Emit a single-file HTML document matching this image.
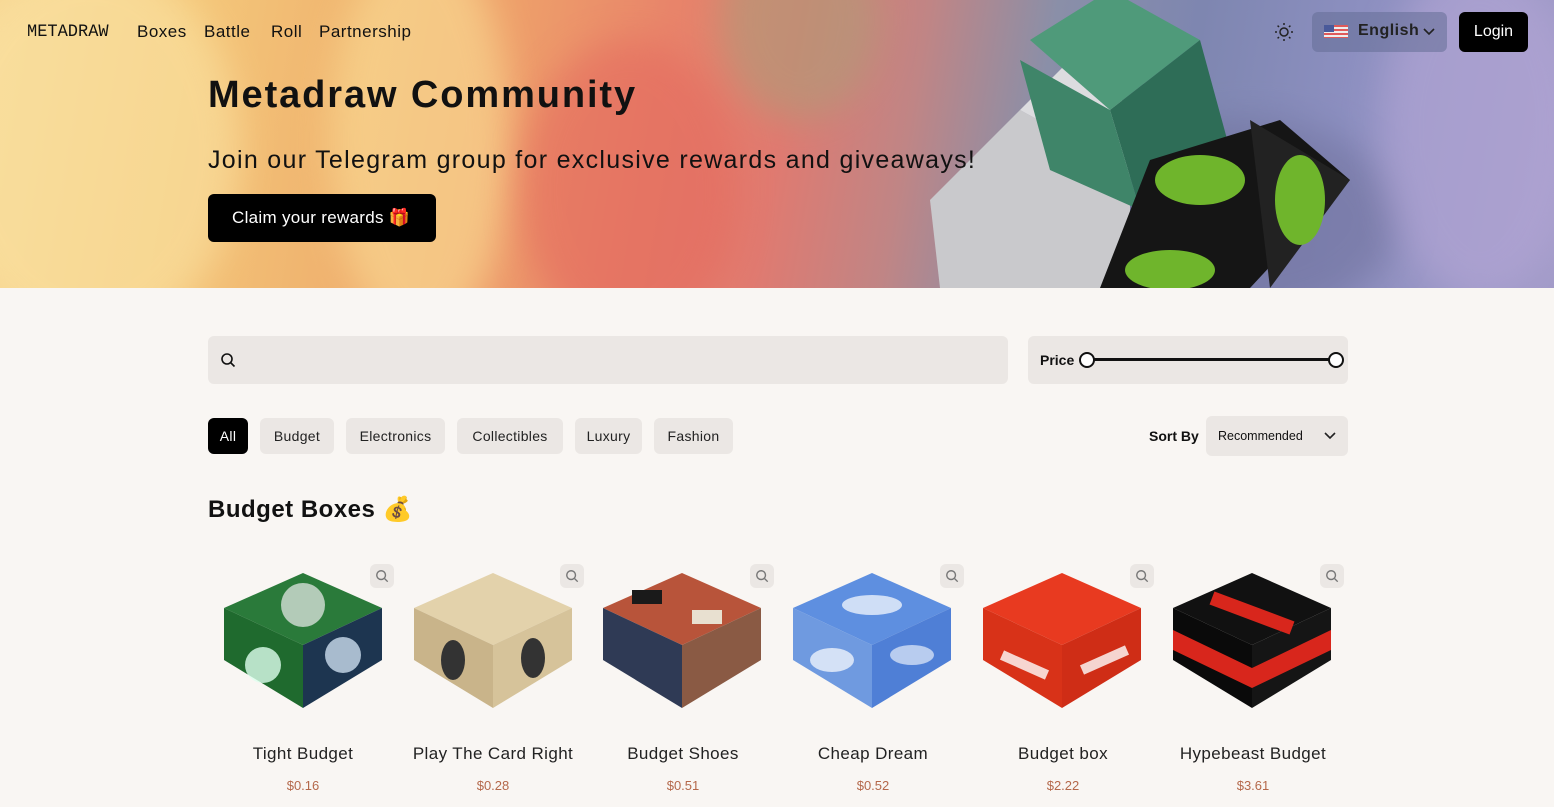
<!DOCTYPE html>
<html><head><meta charset="utf-8"><style>
*{box-sizing:border-box;margin:0;padding:0}
body{width:1554px;height:807px;overflow:hidden;background:#f9f6f3;font-family:"Liberation Sans",sans-serif;color:#111;position:relative}
.hero{position:absolute;left:0;top:0;width:1554px;height:288px;overflow:hidden;
background:linear-gradient(100deg,#f7d48f 0%,#f4c77a 12%,#f0b570 22%,#eea06a 32%,#e8846a 42%,#e07a70 50%,#c08585 58%,#8a8fa8 66%,#7e86b0 75%,#8c8fc0 85%,#a29bc8 100%)}
.w{position:absolute;border-radius:50%;filter:blur(18px);opacity:.55}
nav{position:absolute;top:0;left:0;width:100%;height:64px}
.logo{position:absolute;left:27px;top:23px;font-family:"Liberation Mono",monospace;font-size:17px;transform:scaleY(1.05)}
.nl{position:absolute;top:22px;font-size:17px;font-weight:500;letter-spacing:.5px}
.btn{position:absolute;background:#000;color:#fff;border-radius:6px}
.chip{position:absolute;top:418px;height:36px;background:#ebe7e4;border-radius:6px;font-size:14px;line-height:36px;text-align:center;color:#222;letter-spacing:.3px}
.name{position:absolute;top:744px;width:190px;text-align:center;font-size:17px;color:#222;letter-spacing:.4px}
.price{position:absolute;top:778px;width:190px;text-align:center;font-size:13px;color:#b4684a}
.mag{position:absolute;top:564px;width:24px;height:24px;border-radius:6px;background:#ebe7e4}
.mag svg{position:absolute;left:5px;top:5px}
</style></head><body>
<div class="hero">
<div class="w" style="left:-60px;top:-40px;width:300px;height:380px;background:#fbe6a8"></div>
<div class="w" style="left:330px;top:-60px;width:180px;height:400px;background:#fbe29a"></div>
<div class="w" style="left:520px;top:40px;width:220px;height:300px;background:#e4685e"></div>
<div class="w" style="left:720px;top:-80px;width:160px;height:200px;background:#a8a07a"></div>
<div class="w" style="left:1100px;top:120px;width:300px;height:200px;background:#6d6f9a"></div>
<div class="w" style="left:1380px;top:-40px;width:200px;height:340px;background:#b7a8d8"></div>
<svg style="position:absolute;left:900px;top:0" width="480" height="288">
<polygon points="30,200 120,110 230,170 230,288 40,288" fill="#c9c9cc"/>
<polygon points="120,110 230,170 260,130 170,60" fill="#dcdcdf"/>
<polygon points="130,40 210,-10 300,40 210,110" fill="#4f9a7a"/>
<polygon points="210,110 300,40 330,150 240,210" fill="#2e6d57"/>
<polygon points="120,60 210,110 240,210 150,170" fill="#3f8569"/>
<polygon points="250,160 380,120 450,180 350,288 200,288" fill="#151515"/>
<polygon points="350,120 450,180 370,288" fill="#222"/>
<ellipse cx="300" cy="180" rx="45" ry="25" fill="#6fb52c"/>
<ellipse cx="400" cy="200" rx="25" ry="45" fill="#6fb52c"/>
<ellipse cx="270" cy="270" rx="45" ry="20" fill="#6fb52c"/>
</svg>
<nav>
<div class="logo">METADRAW</div>
<div class="nl" style="left:137px">Boxes</div>
<div class="nl" style="left:204px">Battle</div>
<div class="nl" style="left:271px">Roll</div>
<div class="nl" style="left:319px">Partnership</div>
<svg style="position:absolute;left:1274px;top:22px" width="20" height="20" viewBox="0 0 20 20" stroke="#222" stroke-width="1.5" fill="none"><circle cx="10" cy="10" r="4"/><path d="M10 1v2M10 17v2M1 10h2M17 10h2M3.6 3.6l1.4 1.4M15 15l1.4 1.4M3.6 16.4L5 15M15 5l1.4-1.4"/></svg>
<div style="position:absolute;left:1312px;top:12px;width:135px;height:40px;background:rgba(100,110,150,.55);border-radius:6px"></div>
<svg style="position:absolute;left:1324px;top:25px" width="24" height="13"><rect width="24" height="13" fill="#e05a5a"/><rect y="2" width="24" height="2" fill="#eee"/><rect y="6" width="24" height="2" fill="#eee"/><rect y="10" width="24" height="2" fill="#eee"/><rect width="10" height="7" fill="#4a5a9a"/></svg>
<div style="position:absolute;left:1358px;top:22px;font-size:16px;font-weight:bold;color:#222;letter-spacing:.5px">English</div>
<svg style="position:absolute;left:1423px;top:28px" width="12" height="8"><path d="M1 1l5 5 5-5" stroke="#222" stroke-width="1.6" fill="none"/></svg>
<div class="btn" style="left:1459px;top:12px;width:69px;height:40px;line-height:40px;text-align:center;font-size:16px">Login</div>
</nav>
<div style="position:absolute;left:208px;top:74px;font-size:38px;font-weight:bold;letter-spacing:1.9px">Metadraw Community</div>
<div style="position:absolute;left:208px;top:146px;font-size:25px;letter-spacing:1.3px">Join our Telegram group for exclusive rewards and giveaways!</div>
<div class="btn" style="left:208px;top:194px;width:228px;height:48px;line-height:48px;padding-left:24px;font-size:17px;letter-spacing:.3px">Claim your rewards 🎁</div>
</div>
<div style="position:absolute;left:208px;top:336px;width:800px;height:48px;background:#ebe7e4;border-radius:6px"></div>
<svg style="position:absolute;left:220px;top:352px" width="16" height="16" viewBox="0 0 16 16" fill="none" stroke="#111" stroke-width="1.6"><circle cx="7" cy="7" r="5"/><path d="M11 11l3.5 3.5"/></svg>
<div style="position:absolute;left:1028px;top:336px;width:320px;height:48px;background:#ebe7e4;border-radius:6px"></div>
<div style="position:absolute;left:1040px;top:352px;font-size:14px;font-weight:bold">Price</div>
<div style="position:absolute;left:1087px;top:358px;width:249px;height:3px;background:#111"></div>
<div style="position:absolute;left:1079px;top:352px;width:16px;height:16px;border-radius:50%;border:2px solid #111;background:#fff"></div>
<div style="position:absolute;left:1328px;top:352px;width:16px;height:16px;border-radius:50%;border:2px solid #111;background:#fff"></div>
<div class="chip" style="left:208px;width:40px;background:#000;color:#fff">All</div>
<div class="chip" style="left:260px;width:74px">Budget</div>
<div class="chip" style="left:346px;width:99px">Electronics</div>
<div class="chip" style="left:457px;width:106px">Collectibles</div>
<div class="chip" style="left:575px;width:67px">Luxury</div>
<div class="chip" style="left:654px;width:79px">Fashion</div>
<div style="position:absolute;left:1149px;top:428px;font-size:14px;font-weight:bold">Sort By</div>
<div style="position:absolute;left:1206px;top:416px;width:142px;height:40px;background:#ebe7e4;border-radius:6px;font-size:12.5px;line-height:40px;padding-left:12px">Recommended</div>
<svg style="position:absolute;left:1324px;top:432px" width="12" height="8"><path d="M1 1l5 5 5-5" stroke="#222" stroke-width="1.6" fill="none"/></svg>
<div style="position:absolute;left:208px;top:495px;font-size:24px;font-weight:bold;letter-spacing:.5px">Budget Boxes 💰</div>
<svg style="position:absolute;left:0;top:560px" width="1554" height="160">
<g transform="translate(303,0)"><polygon points="-79,48 0,13 79,48 0,85" fill="#2a7a3a"/><polygon points="-79,48 0,85 0,148 -79,100" fill="#1f6a2e"/><polygon points="0,85 79,48 79,100 0,148" fill="#1d3550"/><circle cx="-40" cy="105" r="18" fill="#dfe" opacity=".8"/><circle cx="40" cy="95" r="18" fill="#cde" opacity=".8"/><circle cx="0" cy="45" r="22" fill="#eee" opacity=".7"/></g>
<g transform="translate(493,0)"><polygon points="-79,48 0,13 79,48 0,85" fill="#e3d2ab"/><polygon points="-79,48 0,85 0,148 -79,100" fill="#c9b48a"/><polygon points="0,85 79,48 79,100 0,148" fill="#d6c39a"/><ellipse cx="-40" cy="100" rx="12" ry="20" fill="#333"/><ellipse cx="40" cy="98" rx="12" ry="20" fill="#333"/></g>
<g transform="translate(682,0)"><polygon points="-79,48 0,13 79,48 0,85" fill="#b8543a"/><polygon points="-79,48 0,85 0,148 -79,100" fill="#2f3a55"/><polygon points="0,85 79,48 79,100 0,148" fill="#8a5a44"/><rect x="-50" y="30" width="30" height="14" fill="#1a1a1a"/><rect x="10" y="50" width="30" height="14" fill="#e8e0d0"/></g>
<g transform="translate(872,0)"><polygon points="-79,48 0,13 79,48 0,85" fill="#5e8fe0"/><polygon points="-79,48 0,85 0,148 -79,100" fill="#6f9ae0"/><polygon points="0,85 79,48 79,100 0,148" fill="#4f7fd6"/><ellipse cx="0" cy="45" rx="30" ry="10" fill="#fff" opacity=".7"/><ellipse cx="-40" cy="100" rx="22" ry="12" fill="#fff" opacity=".7"/><ellipse cx="40" cy="95" rx="22" ry="10" fill="#fff" opacity=".6"/></g>
<g transform="translate(1062,0)"><polygon points="-79,48 0,13 79,48 0,85" fill="#e83a20"/><polygon points="-79,48 0,85 0,148 -79,100" fill="#d83218"/><polygon points="0,85 79,48 79,100 0,148" fill="#cf2d16"/><path d="M-60 95l45 20M20 110l45-20" stroke="#fff" stroke-width="10" opacity=".8"/></g>
<g transform="translate(1252,0)"><polygon points="-79,48 0,13 79,48 0,85" fill="#111"/><polygon points="-79,48 0,85 0,148 -79,100" fill="#0a0a0a"/><polygon points="0,85 79,48 79,100 0,148" fill="#151515"/><path d="M-40 38l80 30" stroke="#d8261c" stroke-width="14"/><path d="M-79 70l79 38v20l-79-38zM0 108l79-38v20l-79 38z" fill="#d8261c"/></g>
</svg>
<div class="mag" style="left:370px"><svg width="14" height="14" viewBox="0 0 16 16" fill="none" stroke="#777" stroke-width="1.6"><circle cx="7" cy="7" r="5"/><path d="M11 11l3.5 3.5"/></svg></div>
<div class="mag" style="left:560px"><svg width="14" height="14" viewBox="0 0 16 16" fill="none" stroke="#777" stroke-width="1.6"><circle cx="7" cy="7" r="5"/><path d="M11 11l3.5 3.5"/></svg></div>
<div class="mag" style="left:750px"><svg width="14" height="14" viewBox="0 0 16 16" fill="none" stroke="#777" stroke-width="1.6"><circle cx="7" cy="7" r="5"/><path d="M11 11l3.5 3.5"/></svg></div>
<div class="mag" style="left:940px"><svg width="14" height="14" viewBox="0 0 16 16" fill="none" stroke="#777" stroke-width="1.6"><circle cx="7" cy="7" r="5"/><path d="M11 11l3.5 3.5"/></svg></div>
<div class="mag" style="left:1130px"><svg width="14" height="14" viewBox="0 0 16 16" fill="none" stroke="#777" stroke-width="1.6"><circle cx="7" cy="7" r="5"/><path d="M11 11l3.5 3.5"/></svg></div>
<div class="mag" style="left:1320px"><svg width="14" height="14" viewBox="0 0 16 16" fill="none" stroke="#777" stroke-width="1.6"><circle cx="7" cy="7" r="5"/><path d="M11 11l3.5 3.5"/></svg></div>
<div class="name" style="left:208px">Tight Budget</div><div class="price" style="left:208px">$0.16</div>
<div class="name" style="left:398px">Play The Card Right</div><div class="price" style="left:398px">$0.28</div>
<div class="name" style="left:588px">Budget Shoes</div><div class="price" style="left:588px">$0.51</div>
<div class="name" style="left:778px">Cheap Dream</div><div class="price" style="left:778px">$0.52</div>
<div class="name" style="left:968px">Budget box</div><div class="price" style="left:968px">$2.22</div>
<div class="name" style="left:1158px">Hypebeast Budget</div><div class="price" style="left:1158px">$3.61</div>
</body></html>
